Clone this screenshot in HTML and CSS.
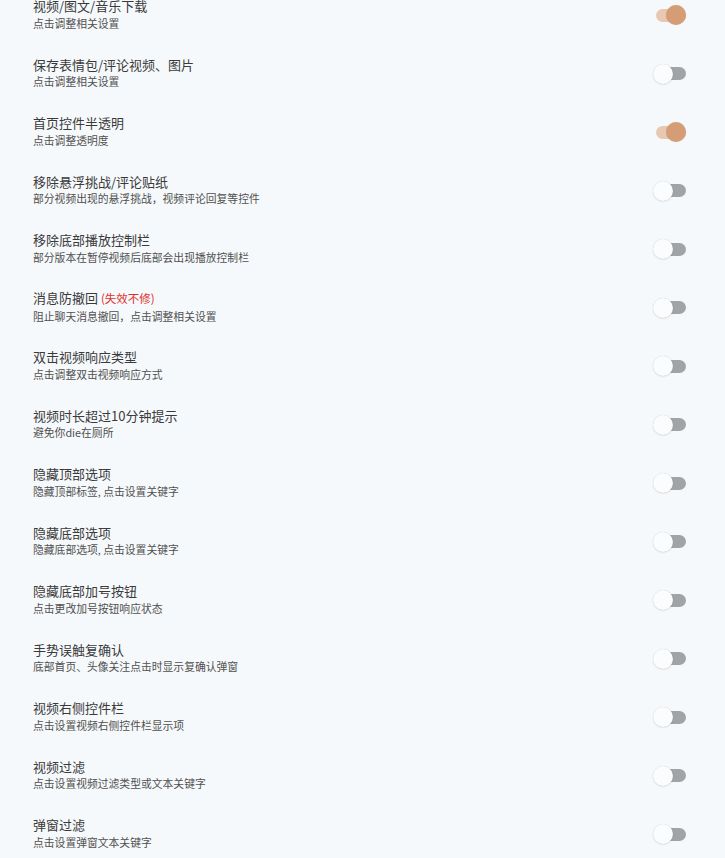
FILE: index.html
```html
<!DOCTYPE html>
<html lang="zh">
<head>
<meta charset="utf-8">
<link rel="stylesheet" href="styles.css">
</head>
<body>
<div class="list">
  <div class="row"><div class="text"><div class="title">视频/图文/音乐下载</div><div class="sub">点击调整相关设置</div></div><div class="switch on"><span class="thumb"></span></div></div>
  <div class="row"><div class="text"><div class="title">保存表情包/评论视频、图片</div><div class="sub">点击调整相关设置</div></div><div class="switch"><span class="thumb"></span></div></div>
  <div class="row"><div class="text"><div class="title">首页控件半透明</div><div class="sub">点击调整透明度</div></div><div class="switch on"><span class="thumb"></span></div></div>
  <div class="row"><div class="text"><div class="title">移除悬浮挑战/评论贴纸</div><div class="sub">部分视频出现的悬浮挑战，视频评论回复等控件</div></div><div class="switch"><span class="thumb"></span></div></div>
  <div class="row"><div class="text"><div class="title">移除底部播放控制栏</div><div class="sub">部分版本在暂停视频后底部会出现播放控制栏</div></div><div class="switch"><span class="thumb"></span></div></div>
  <div class="row"><div class="text"><div class="title">消息防撤回 <span class="warn">(失效不修)</span></div><div class="sub">阻止聊天消息撤回，点击调整相关设置</div></div><div class="switch"><span class="thumb"></span></div></div>
  <div class="row"><div class="text"><div class="title">双击视频响应类型</div><div class="sub">点击调整双击视频响应方式</div></div><div class="switch"><span class="thumb"></span></div></div>
  <div class="row"><div class="text"><div class="title">视频时长超过10分钟提示</div><div class="sub">避免你die在厕所</div></div><div class="switch"><span class="thumb"></span></div></div>
  <div class="row"><div class="text"><div class="title">隐藏顶部选项</div><div class="sub">隐藏顶部标签, 点击设置关键字</div></div><div class="switch"><span class="thumb"></span></div></div>
  <div class="row"><div class="text"><div class="title">隐藏底部选项</div><div class="sub">隐藏底部选项, 点击设置关键字</div></div><div class="switch"><span class="thumb"></span></div></div>
  <div class="row"><div class="text"><div class="title">隐藏底部加号按钮</div><div class="sub">点击更改加号按钮响应状态</div></div><div class="switch"><span class="thumb"></span></div></div>
  <div class="row"><div class="text"><div class="title">手势误触复确认</div><div class="sub">底部首页、头像关注点击时显示复确认弹窗</div></div><div class="switch"><span class="thumb"></span></div></div>
  <div class="row"><div class="text"><div class="title">视频右侧控件栏</div><div class="sub">点击设置视频右侧控件栏显示项</div></div><div class="switch"><span class="thumb"></span></div></div>
  <div class="row"><div class="text"><div class="title">视频过滤</div><div class="sub">点击设置视频过滤类型或文本关键字</div></div><div class="switch"><span class="thumb"></span></div></div>
  <div class="row"><div class="text"><div class="title">弹窗过滤</div><div class="sub">点击设置弹窗文本关键字</div></div><div class="switch"><span class="thumb"></span></div></div>
</div>
</body>
</html>
```
FILE: styles.css
```css
html, body {
  margin: 0;
  padding: 0;
  background: #f6f9fb;
  height: 100%;
  overflow: hidden;
}
body {
  font-family: "Noto Sans CJK SC", "Noto Sans", sans-serif;
  color: #333;
}
.list {
  margin-top: -14.75px;
}
.row {
  height: 58.5px;
  box-sizing: border-box;
  padding: 0 39px 0 33px;
  display: flex;
  align-items: center;
  justify-content: space-between;
}
.text {
  display: flex;
  flex-direction: column;
  gap: 1.5px;
  margin-bottom: 1px;
}
.title {
  font-size: 13px;
  line-height: 17px;
  color: #3a3a3a;
}
.sub {
  font-size: 10.8px;
  line-height: 15px;
  color: #505050;
}
.warn {
  color: #e0302c;
  font-size: 11.5px;
}
.switch {
  position: relative;
  width: 30px;
  height: 13px;
  border-radius: 7px;
  background: #a0a4a7;
  flex: none;
  margin-top: 1px;
}
.switch .thumb {
  position: absolute;
  top: -3.5px;
  left: -3px;
  width: 20px;
  height: 20px;
  border-radius: 50%;
  background: #fbfcfd;
  box-shadow: 0 0 1px rgba(0,0,0,0.2), 0 1px 2px rgba(0,0,0,0.08);
}
.switch.on {
  background: #e8c8b0;
}
.switch.on .thumb {
  left: auto;
  right: 0;
  background: #d49d76;
  box-shadow: 0 0 1px rgba(0,0,0,0.15);
}
```
